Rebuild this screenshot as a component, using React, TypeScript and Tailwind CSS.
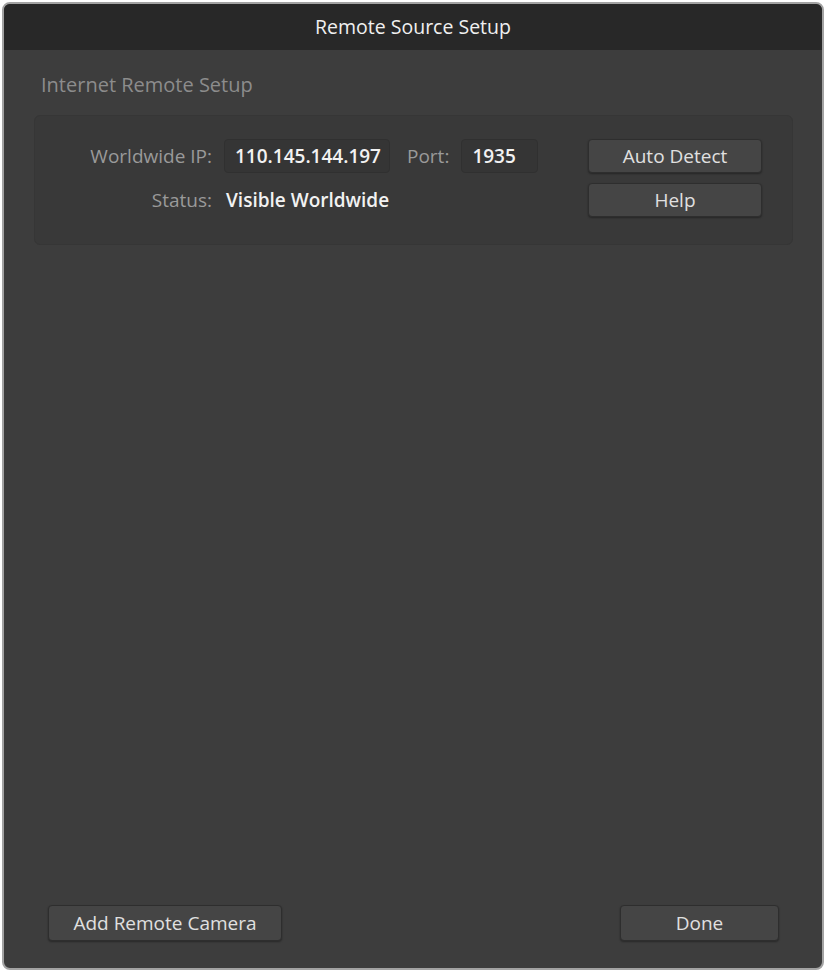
import React from "react";

const font = { fontFamily: '"Open Sans", "Noto Sans", sans-serif' };

function Field({ value, className }: { value: string; className: string }) {
  return (
    <div
      className={`h-[34px] flex items-center px-[10px] rounded-[4px] bg-[#353535] border border-[#303030] text-[19px] font-semibold text-[#f2f2f2] ${className}`}
    >
      {value}
    </div>
  );
}

function Button({ label, className }: { label: string; className: string }) {
  return (
    <button
      className={`flex items-center justify-center rounded-[4px] bg-[#454545] border border-[#2e2e2e] shadow-[0_1px_2px_rgba(0,0,0,0.35)] text-[19px] text-[#e0e0e0] ${className}`}
    >
      {label}
    </button>
  );
}

export default function App() {
  return (
    <div className="w-[827px] h-[974px] bg-white p-[2px]" style={font}>
      <div className="w-[822px] h-[968px] rounded-[8px] border-2 border-[#a3a3a3] bg-[#3d3d3d] flex flex-col overflow-hidden">
        {/* Title bar */}
        <div className="h-[46px] shrink-0 bg-[#282828] flex items-center justify-center text-[19.5px] text-[#f0f0f0]">
          Remote Source Setup
        </div>

        {/* Body */}
        <div className="flex-1 flex flex-col pl-[30px] pt-[20px] pb-[27px]">
          <div className="pl-[7px] text-[20px] text-[#8c8c8c] leading-[30px]">
            Internet Remote Setup
          </div>

          <div className="mt-[15px] h-[130px] w-[759px] rounded-[6px] bg-[#393939] border border-[#363636] pt-[23px] pr-[30px] flex items-start">
            <div className="grid grid-cols-[177px_auto] gap-x-[12px] gap-y-[10px] auto-rows-[34px] items-center text-[19px]">
              <span className="justify-self-end text-[#9a9a9a]">Worldwide IP:</span>
              <div className="flex items-center">
                <Field value="110.145.144.197" className="w-[166px]" />
                <span className="ml-[17px] text-[#9a9a9a]">Port:</span>
                <Field value="1935" className="ml-[12px] w-[77px]" />
              </div>
              <span className="justify-self-end text-[#9a9a9a]">Status:</span>
              <span className="pl-[2px] font-semibold text-[#f2f2f2]">Visible Worldwide</span>
            </div>
            <div className="ml-auto flex flex-col gap-[10px]">
              <Button label="Auto Detect" className="w-[174px] h-[34px]" />
              <Button label="Help" className="w-[174px] h-[34px]" />
            </div>
          </div>

          <div className="mt-auto flex justify-between pl-[14px] pr-[43px]">
            <Button label="Add Remote Camera" className="w-[234px] h-[36px]" />
            <Button label="Done" className="w-[159px] h-[36px]" />
          </div>
        </div>
      </div>
    </div>
  );
}
